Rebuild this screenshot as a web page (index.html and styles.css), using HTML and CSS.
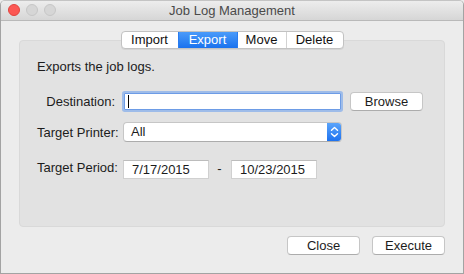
FILE: index.html
```html
<!DOCTYPE html>
<html lang="en">
<head>
    <meta charset="UTF-8">
    <meta name="viewport" content="width=device-width, initial-scale=1.0">
    <title>Job Log Management</title>
    <link rel="stylesheet" href="styles.css">
</head>
<body>
    <div class="window">
        <div class="titlebar">
            <div class="lights">
                <span class="light close"></span>
                <span class="light"></span>
                <span class="light"></span>
            </div>
            <div class="title">Job Log Management</div>
        </div>

        <div class="main">
            <div class="tabs">
                <div class="tab tab-import">Import</div>
                <div class="tab tab-export active">Export</div>
                <div class="tab tab-move">Move</div>
                <div class="tab tab-delete">Delete</div>
            </div>

            <div class="group">
                <div class="desc">Exports the job logs.</div>

                <div class="row row-dest">
                    <label class="label">Destination:</label>
                    <div class="text-field focused"><span class="caret"></span></div>
                    <button class="btn btn-browse">Browse</button>
                </div>

                <div class="row row-printer">
                    <label class="label">Target Printer:</label>
                    <div class="select">
                        <span class="select-value">All</span>
                        <span class="select-arrows">
                            <svg width="15" height="20" viewBox="0 0 15 20">
                                <path d="M4.5 8.2 L7.5 5.4 L10.5 8.2" fill="none" stroke="#fff" stroke-width="1.4" stroke-linecap="round" stroke-linejoin="round"/>
                                <path d="M4.5 11.8 L7.5 14.6 L10.5 11.8" fill="none" stroke="#fff" stroke-width="1.4" stroke-linecap="round" stroke-linejoin="round"/>
                            </svg>
                        </span>
                    </div>
                </div>

                <div class="row row-period">
                    <label class="label label-period">Target Period:</label>
                    <div class="date-field">7/17/2015</div>
                    <span class="dash">-</span>
                    <div class="date-field">10/23/2015</div>
                </div>
            </div>

            <div class="footer">
                <button class="btn">Close</button>
                <button class="btn">Execute</button>
            </div>
        </div>
    </div>
</body>
</html>
```

FILE: styles.css
```css
* {
    box-sizing: border-box;
}
body {
    margin: 0;
    padding: 0;
    font-family: "Liberation Sans", Arial, sans-serif;
    font-size: 13px;
    color: #1c1c1c;
    background: #ececec;
}
.window {
    width: 464px;
    height: 274px;
    background: #ececec;
    border: 1px solid #a3a3a3;
    border-top-color: #c4c4c4;
    border-radius: 5px 5px 0 0;
    overflow: hidden;
}
.titlebar {
    position: relative;
    height: 20px;
    background: linear-gradient(#ededed, #d6d6d6);
    border-bottom: 1px solid #b9b9b9;
}
.lights {
    display: flex;
    gap: 6px;
    padding: 3px 0 0 7px;
}
.light {
    width: 12px;
    height: 12px;
    border-radius: 50%;
    background: #d6d6d6;
    border: 1px solid #c6c6c6;
}
.light.close {
    background: #fc5753;
    border-color: #e0443e;
}
.title {
    position: absolute;
    top: 3px;
    left: 0;
    right: 0;
    text-align: center;
    color: #4a4a4a;
    line-height: 14px;
}
.main {
    padding: 10px 18px 0;
}
.tabs {
    position: relative;
    z-index: 1;
    display: flex;
    width: 223px;
    height: 18px;
    margin: 0 auto -9px;
    background: #fff;
    border: 1px solid #c2c2c2;
    border-radius: 4px;
    box-shadow: 0 1px 0 rgba(0, 0, 0, 0.06);
    overflow: hidden;
}
.tab {
    line-height: 16px;
    text-align: center;
    color: #111;
    border-left: 1px solid #d2d2d2;
}
.tab:first-child {
    border-left: none;
}
.tab-import { width: 56px; }
.tab-export { width: 59px; }
.tab-move { width: 49px; }
.tab-delete { flex: 1; }
.tab.active {
    background: linear-gradient(#4a9bfa, #1a72ee);
    color: #fff;
    border-left-color: #2a7cf0;
}
.tab.active + .tab {
    border-left-color: #2a7cf0;
}
.group {
    height: 187px;
    background: #e2e2e2;
    border: 1px solid #d9d9d9;
    border-radius: 4px;
    padding: 18px 17px 0;
}
.desc {
    line-height: 16px;
    margin-bottom: 16px;
}
.row {
    display: flex;
    align-items: center;
}
.row-dest {
    height: 21px;
}
.row-printer {
    height: 20px;
    margin-top: 10px;
}
.row-period {
    height: 19px;
    margin-top: 18px;
}
.label {
    width: 78px;
    margin-right: 7px;
    text-align: right;
    white-space: nowrap;
}
.label-period {
    padding-bottom: 4px;
}
.text-field {
    width: 217px;
    height: 17px;
    margin-left: 2px;
    background: #fff;
    border: 1px solid #c8c8c8;
    padding: 1px 0 0 3px;
}
.text-field.focused {
    border-color: #6d9ce6;
    box-shadow: 0 0 0 2px rgba(122, 167, 236, 0.65);
    border-radius: 1px;
}
.caret {
    display: block;
    width: 1px;
    height: 13px;
    background: #000;
}
.btn {
    width: 73px;
    height: 19px;
    padding: 0;
    font-family: "Liberation Sans", Arial, sans-serif;
    font-size: 13px;
    color: #1c1c1c;
    background: #fff;
    border: 1px solid #c6c6c6;
    border-bottom-color: #acacac;
    border-radius: 4px;
}
.btn-browse {
    margin-left: 9px;
}
.select {
    display: flex;
    width: 219px;
    height: 20px;
    margin-left: 1px;
    background: #fff;
    border: 1px solid #c6c6c6;
    border-bottom-color: #acacac;
    border-radius: 4px;
    overflow: hidden;
}
.select-value {
    flex: 1;
    padding-left: 7px;
    line-height: 18px;
}
.select-arrows {
    width: 15px;
    margin: -1px -1px -1px 0;
    background: linear-gradient(#5ea7fb, #1b70ef);
}
.select-arrows svg {
    display: block;
}
.date-field {
    width: 86px;
    height: 19px;
    margin-left: 1px;
    padding-left: 8px;
    line-height: 18px;
    background: #fff;
    border: 1px solid #d0d0d0;
    border-top-color: #bcbcbc;
}
.dash {
    width: 21px;
    text-align: center;
    padding-bottom: 3px;
}
.footer {
    display: flex;
    justify-content: flex-end;
    gap: 12px;
    margin-top: 9px;
}
```
